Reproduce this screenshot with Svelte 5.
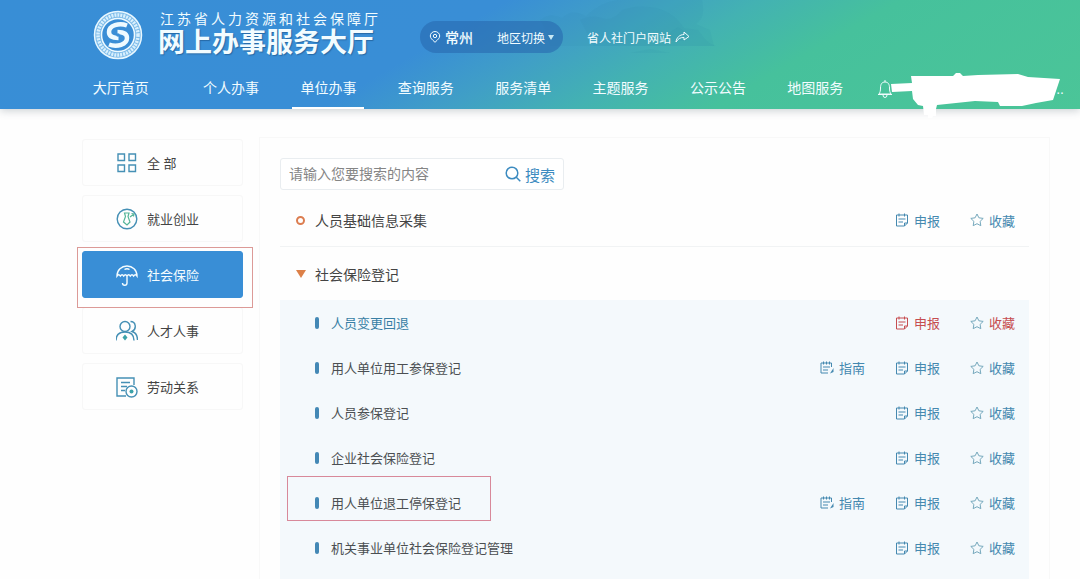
<script>
  const nav = ['大厅首页', '个人办事', '单位办事', '查询服务', '服务清单', '主题服务', '公示公告', '地图服务'];
  const categories = [
    { label: '全 部', icon: 'grid' },
    { label: '就业创业', icon: 'job' },
    { label: '社会保险', icon: 'umbrella', active: true },
    { label: '人才人事', icon: 'people' },
    { label: '劳动关系', icon: 'contract' }
  ];
  const services = [
    { name: '人员变更回退', hot: true },
    { name: '用人单位用工参保登记', guide: true },
    { name: '人员参保登记' },
    { name: '企业社会保险登记' },
    { name: '用人单位退工停保登记', guide: true, marked: true },
    { name: '机关事业单位社会保险登记管理' }
  ];
</script>

{#snippet actions(guide, hot)}
  <div class="actions" class:hot>
    {#if guide}
      <a href="#guide">
        <svg width="14" height="14" viewBox="0 0 14 14"><path d="M11.500 6V2H1v10h7M3.500 .5v3M6.500 .5v3M9.500 .5v3M3 6h7M3 9h5" /><path class="solid" d="M13.500 7v4l-3.500 1.500z" /></svg>
        <span>指南</span>
      </a>
    {/if}
    <a href="#apply">
      <svg width="14" height="14" viewBox="0 0 14 14"><path d="M12.500 10V2H1.500v11H9.500l3-3zM9.500 13v-3h3M4 .5v3M9.500 .5v3M3.500 6H10.500M3.500 9H8" /></svg>
      <span>申报</span>
    </a>
    <button type="button">
      <svg class="star" width="14" height="14" viewBox="0 0 14 14"><path d="m7 1 1.900 3.800 4.300.6-3.100 3 .7 4.300L7 10.700l-3.800 2 .7-4.300-3.100-3 4.300-.6z" /></svg>
      <span>收藏</span>
    </button>
  </div>
{/snippet}

<div class="page">
  <header>
    <svg class="scenery" width="200" height="60" viewBox="0 0 200 60" aria-hidden="true">
      <path d="M20 20q10-8 22-2 10-10 24-2 14-14 32-16h84q4 18-6 24l14 6 4 16H30q-4-18-10-26z" />
      <path d="M60 20q12-6 22-2t20-8q16-6 34-2t28 20l14 2 8 10q4 4 10 6H74z" />
      <path d="M150 32l8-5 8 5v9h-16zM0 53h110l20-4 20 4z" />
    </svg>
    <div class="top">
      <svg class="logo" width="50" height="50" viewBox="0 0 50 50" role="img" aria-label="江苏人社">
        <circle cx="25" cy="25" r="23.500" fill="#7dbbe9" stroke="#e9f8ff" stroke-width="1.500" />
        <circle cx="25" cy="25" r="20" fill="none" stroke="#d9f0fd" stroke-width="3.500" stroke-dasharray="2 1" />
        <circle cx="25" cy="25" r="16.500" fill="#3a8ed6" stroke="#eefaff" stroke-width="1.500" />
        <path d="M34 15.500c-8-3-18 0-18 6.500 0 4.500 4 6 9.500 6" fill="none" stroke="#eefaff" stroke-width="4.500" />
        <path d="M16 34.500c8 3 18 0 18-6.500 0-4.500-4-6-9.500-6" fill="none" stroke="#eefaff" stroke-width="4.500" />
        <circle cx="25" cy="25" r="1.800" fill="#3a8ed6" stroke="none" />
      </svg>
      <div class="brand">
        <p>江苏省人力资源和社会保障厅</p>
        <h1>网上办事服务大厅</h1>
      </div>
      <div class="region">
        <svg width="12" height="12" viewBox="0 0 12 12"><path d="M6 11.300C3 8.500 1.300 7 1.300 5a4.700 4.500 0 0 1 9.400 0C10.700 7 9 8.500 6 11.300z" /><circle cx="6" cy="5" r="1.700" /></svg>
        <strong>常州</strong>
        <button type="button">地区切换<i></i></button>
      </div>
      <a class="portal" href="#portal">省人社门户网站
        <svg width="15" height="12" viewBox="0 0 15 12"><path d="M9 1l5 4.500L9 9V6.500C5 6.300 3 8 1 11 1.500 6.500 4.500 3.700 9 3.500z" /></svg>
      </a>
    </div>
    <nav>
      {#each nav as item}
        <a href="#nav" class:current={item === '单位办事'}><span>{item}</span></a>
      {/each}
      <div class="user">
        <button type="button" aria-label="消息">
          <svg width="16" height="20" viewBox="0 0 16 20"><path d="M8 1v2M2 15c1-1.500 1.500-3 1.500-6C3.500 5 5 3 8 3s4.500 2 4.500 6c0 3 .5 4.500 1.500 6zM1 15.500h14M6 16q0 2.500 2 2.500t2-2.500" /></svg>
        </button>
        <span>..</span>
      </div>
    </nav>
    <svg class="scribble" width="216" height="60" viewBox="864 59 216 60" aria-hidden="true">
      <path d="M891 84l21-1-1-7h42l3-3h4l3 3 15-1 40-1 10 3 32 2-3 9-4 12-17 3-14 3h-22l-2-4-23-1-38 4-1 4v7h-3l-1 2h-4v-3h-4l-1-9-5-1-5-6-1-8-20 1z" />
    </svg>
  </header>

  <main>
    <aside>
      {#each categories as c}
        <a href="#category" class="category" class:active={c.active}>
          <svg width="22" height="22" viewBox="0 0 22 22">
            {#if c.icon === 'grid'}
              <path d="M2 2h6.500v6.500H2zM13 2h6.500v6.500h-6.500zM2 13h6.500v6.500H2zM13 13h6.500v6.500h-6.500z" />
            {:else if c.icon === 'job'}
              <circle cx="11" cy="11" r="9.800" />
              <path class="green" d="M8.500 5h4.500l-1 3.500 2 5.500-3 3-3.500-3L9.500 8.500zM14 9l4-3M15.500 5.500 18 6l-.5 2.500" />
            {:else if c.icon === 'umbrella'}
              <path d="M1 12C1 6 5.500 2 11 2s10 4 10 10q-1.700-2.500-3.400 0-1.600-2.500-3.300 0-1.600-2.500-3.300 0-1.600-2.500-3.300 0-1.600-2.500-3.300 0-1.700-2.500-3.400 0zM11 11v8c0 3-4.500 3-4.500 0M8.500 5.500Q11 4 13.500 5.500" />
            {:else if c.icon === 'people'}
              <circle cx="9" cy="6.500" r="5" />
              <path d="M0 20.500c0-5.500 3-8.500 9-8.500s9 3 9 8.500M14.500 1.500c5.500 0 6.500 7.500 1.500 10 3.500 1 5.500 4 5.500 8.500" />
              <path class="fill" d="M9 14.500l2.500 3-2.500 3-2.500-3z" />
            {:else}
              <path d="M18 9V2H1v18h9M5 6.500h9M5 10.500h6M5 14.500h4" />
              <circle cx="15.500" cy="15.500" r="5.500" />
              <circle class="fill" cx="15.500" cy="15.500" r="2" />
            {/if}
          </svg>
          <span>{c.label}</span>
        </a>
      {/each}
    </aside>

    <section class="panel">
      <form class="search">
        <input type="text" aria-label="搜索内容" placeholder="请输入您要搜索的内容" />
        <button type="button">
          <svg width="16" height="16" viewBox="0 0 16 16"><circle cx="7" cy="7" r="5.800" /><path d="M11.300 11.300 15.300 15.300" /></svg>
          搜索
        </button>
      </form>

      <div class="group first">
        <i class="ring"></i>
        <h2>人员基础信息采集</h2>
        {@render actions(false, false)}
      </div>
      <div class="group">
        <i class="arrow"></i>
        <h2>社会保险登记</h2>
      </div>

      <ul>
        {#each services as s}
          <li class:hot={s.hot}>
            <a class="name" class:marked={s.marked} href="#service">{s.name}</a>
            {@render actions(s.guide, s.hot)}
          </li>
        {/each}
      </ul>
    </section>
  </main>
</div>

<style>
  :global(body) {
    margin: 0;
    background: #fefefe;
    font-family: "Liberation Sans", "Noto Sans CJK SC", sans-serif;
  }
  * { box-sizing: border-box; }
  a { color: inherit; text-decoration: none; }
  button { padding: 0; border: 0; background: none; color: inherit; font: inherit; cursor: pointer; }
  svg { flex: none; fill: none; stroke: currentColor; }
  h1, h2, p, ul { margin: 0; padding: 0; font-weight: 400; }

  .page { display: flex; flex-direction: column; min-height: 100vh; }

  header {
    position: relative;
    color: #f2fcff;
    background: linear-gradient(150deg, #388ed6 0%, #398ed6 40%, #409fc6 50%, #43b2b2 60%, #46c19c 71%, #4bc598 100%);
    box-shadow: 0 2px 8px rgba(60, 80, 90, 0.25);
  }
  .scenery { position: absolute; left: 520px; top: 0; stroke: none; fill: #2a7fa8; fill-opacity: 0.08; }
  .top { position: relative; display: flex; align-items: center; height: 68px; padding: 2px 0 0 93px; }
  .brand { margin-left: 15px; white-space: nowrap; }
  .brand p { font-size: 14px; line-height: 16px; letter-spacing: 3px; padding-left: 2px; }
  .brand h1 { font-size: 27px; line-height: 32px; font-weight: 700; text-shadow: 1px 1px 1px rgba(20, 70, 120, 0.5); }
  .region {
    display: flex; align-items: center; height: 32px; margin: 4px 0 0 39px; padding: 0 9px;
    border-radius: 16px; background: rgba(40, 105, 175, 0.6); white-space: nowrap;
  }
  .region strong { margin: 0 24px 0 4px; font-size: 14px; font-weight: 500; }
  .region button { display: flex; align-items: center; font-size: 12px; }
  .region i { margin-left: 3px; border: 3px solid transparent; border-top: 5px solid #c8e8f4; border-bottom: 0; }
  .portal { display: flex; align-items: center; gap: 4px; margin: 4px 0 0 24px; font-size: 12px; white-space: nowrap; }

  nav { position: relative; display: flex; height: 41px; padding-left: 72px; font-size: 14px; white-space: nowrap; }
  nav a { flex: 1; display: flex; justify-content: center; }
  nav a:first-child { margin-right: 13px; }
  nav a span { height: 41px; padding: 0 8px; line-height: 40px; }
  nav .current span { border-bottom: 2px solid #fff; }
  .user { display: flex; align-items: center; justify-content: space-between; width: 216px; padding: 0 16px 0 13px; }
  .user button { display: flex; }
  .scribble { position: absolute; right: 0; bottom: -10px; stroke: none; fill: #fff; z-index: 1; pointer-events: none; }

  main { flex: 1; display: flex; gap: 16px; padding: 28px 30px 0 82px; }
  aside { display: flex; flex-direction: column; gap: 9px; width: 161px; padding-top: 2px; }
  .category {
    position: relative; display: flex; align-items: center; gap: 9px; height: 47px; padding-left: 33px;
    border: 1px solid #f7f7f7; border-radius: 3px; color: #444; font-size: 13px;
  }
  .category svg { stroke: #4590b5; stroke-width: 1.400; }
  .category svg .green { stroke: #55b598; stroke-width: 1.200; }
  .category svg .fill { fill: #3ba2a8; stroke: none; }
  .category.active { z-index: 1; border-color: #398ed6; background: #398ed6; color: #f4fcff; }
  .category.active svg { stroke: #f4fcff; }
  .category.active::after {
    content: ""; position: absolute; inset: -5px -11px -11px -6px; border: 1px solid #dc9a97;
  }

  .panel { flex: 1; display: flex; flex-direction: column; padding: 20px 20px 0; border: 1px solid #f8f8f8; border-bottom: 0; }
  .search { display: flex; align-items: center; width: 284px; height: 32px; border: 1px solid #e9edf0; border-radius: 3px; background: #fff; }
  .search input { flex: 1; min-width: 0; padding: 0 8px; border: 0; outline: 0; background: none; color: #444; font: inherit; font-size: 14px; }
  .search input::placeholder { color: #858585; opacity: 1; }
  .search button { display: flex; align-items: center; gap: 4px; padding-right: 8px; color: #3c8bc0; font-size: 15px; }
  .search svg { stroke-width: 1.500; }

  .group { display: flex; align-items: center; height: 53px; padding: 0 14px 0 16px; color: #444; }
  .group h2 { margin-left: 10px; font-size: 14px; }
  .first { height: 57px; padding-top: 4px; border-bottom: 1px solid #f1f3f4; }
  .ring { width: 9px; height: 9px; border: 2px solid #dc7d50; border-radius: 50%; }
  .arrow { border: 5px solid transparent; border-top: 8px solid #dc8048; border-bottom: 0; margin-right: -1px; }

  ul { flex: 1; list-style: none; background: #f4f9fc; }
  li { display: flex; align-items: center; height: 45px; padding: 0 14px 0 7px; }
  .name { position: relative; display: flex; align-items: center; height: 45px; padding: 0 30px 0 28px; color: #4b4f52; font-size: 13px; }
  .name::before { content: ""; width: 4px; height: 12px; margin-right: 12px; border-radius: 2px; background: #4388b5; }
  .name.marked::after { content: ""; position: absolute; inset: -4px 0 4px; border: 1px solid #d8899a; }
  li.hot .name { color: #387fa5; }

  .actions { display: flex; gap: 30px; margin-left: auto; color: #4589b0; font-size: 13px; white-space: nowrap; }
  .actions a, .actions button { display: flex; align-items: center; gap: 5px; }
  .actions .star { stroke: #76a9bd; }
  .actions .solid { fill: currentColor; stroke: none; }
  .actions.hot { color: #c64d50; }
</style>
